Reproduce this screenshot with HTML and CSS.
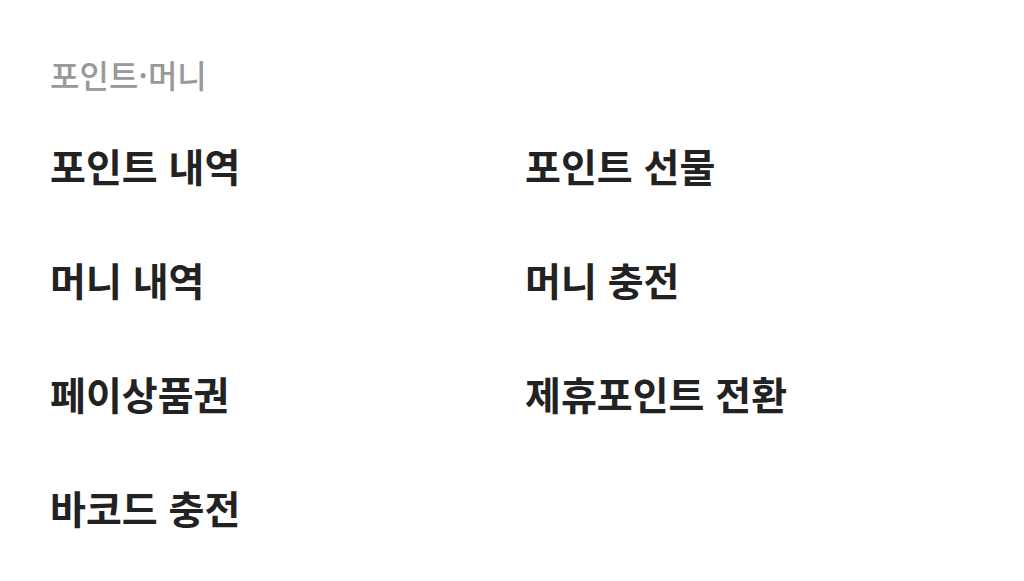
FILE: index.html
```html
<!DOCTYPE html>
<html lang="ko">
<head>
<meta charset="utf-8">
<link rel="stylesheet" href="styles.css">
</head>
<body>
<section class="menu">
  <h2 class="menu-title">포인트·머니</h2>
  <ul class="menu-grid">
    <li class="menu-item">포인트 내역</li>
    <li class="menu-item">포인트 선물</li>
    <li class="menu-item">머니 내역</li>
    <li class="menu-item">머니 충전</li>
    <li class="menu-item">페이상품권</li>
    <li class="menu-item">제휴포인트 전환</li>
    <li class="menu-item">바코드 충전</li>
  </ul>
</section>
</body>
</html>
```
FILE: styles.css
```css
html, body {
  margin: 0;
  padding: 0;
  background: #fff;
}
body {
  font-family: "Noto Sans CJK KR", "Noto Sans", sans-serif;
}
.menu {
  padding: 52px 50px 0 50px;
}
.menu-title {
  margin: 0;
  font-size: 32px;
  font-weight: 500;
  color: #999;
  line-height: 44px;
}
.menu-grid {
  list-style: none;
  margin: 42px 0 0 0;
  padding: 0;
  display: grid;
  grid-template-columns: 475px 1fr;
  row-gap: 60px;
}
.menu-item {
  font-size: 39px;
  font-weight: 700;
  color: #222;
  line-height: 54px;
}
```
